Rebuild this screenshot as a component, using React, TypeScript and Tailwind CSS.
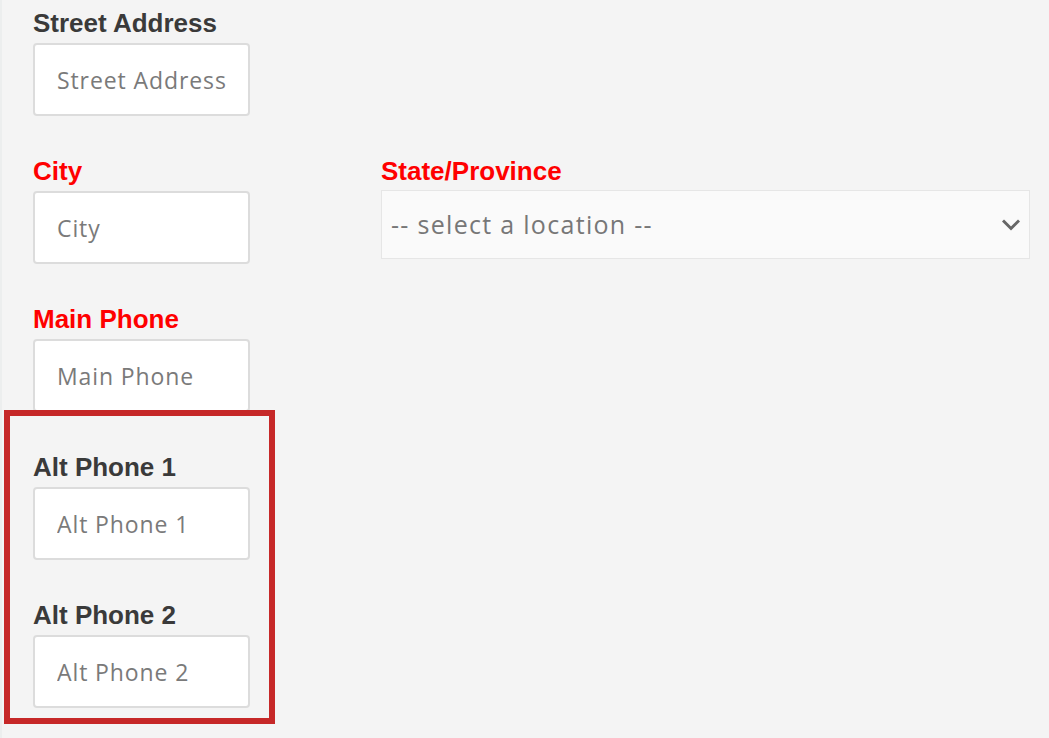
import React from "react";

const labelBase =
  "block font-bold text-[26px] leading-[30px] pt-[2px] mb-[5px] [font-family:'Liberation_Sans',Arial,sans-serif]";

function Field({
  label,
  placeholder,
  required,
}: {
  label: string;
  placeholder: string;
  required?: boolean;
}) {
  return (
    <div className="w-[217px] mb-[38px]">
      <label
        className={`${labelBase} ${required ? "text-[#ff0000]" : "text-[#3a3a3a]"}`}
      >
        {label}
      </label>
      <input
        placeholder={placeholder}
        className="block w-[217px] h-[73px] bg-white border-2 border-[#dcdcdc] rounded-[4px] pl-[22px] pr-[20px] text-[23px] tracking-[0.9px] text-[#555] placeholder:text-[#7a7a7a] outline-none [font-family:'Open_Sans',sans-serif]"
      />
    </div>
  );
}

export default function App() {
  return (
    <div className="relative min-h-[738px] w-[1049px] bg-[#f4f4f4] pl-[33px] pt-[6px] overflow-hidden">
      <div className="absolute left-0 top-0 h-full w-[2px] bg-[#eceeee]" />
      <Field label="Street Address" placeholder="Street Address" />
      <div className="flex">
        <Field label="City" placeholder="City" required />
        <div className="ml-[131px] w-[649px]">
          <label className={`${labelBase} text-[#ff0000]`}>State/Province</label>
          <div className="flex items-center justify-between h-[69px] bg-[#fafafa] border border-[#e6e6e6] pl-[9px] pr-[9px] -mt-[1px]">
            <span className="text-[25px] tracking-[1.3px] text-[#777] [font-family:'Open_Sans',sans-serif]">
              -- select a location --
            </span>
            <svg width="18" height="12" viewBox="0 0 18 12" fill="none">
              <path
                d="M2 2.5 L9 9.5 L16 2.5"
                stroke="#666"
                strokeWidth="3"
                strokeLinecap="square"
                strokeLinejoin="miter"
              />
            </svg>
          </div>
        </div>
      </div>
      <Field label="Main Phone" placeholder="Main Phone" required />
      <Field label="Alt Phone 1" placeholder="Alt Phone 1" />
      <Field label="Alt Phone 2" placeholder="Alt Phone 2" />
      <div className="absolute left-[4px] top-[410px] w-[271px] h-[314px] border-[6px] border-[#c62828] pointer-events-none" />
    </div>
  );
}
